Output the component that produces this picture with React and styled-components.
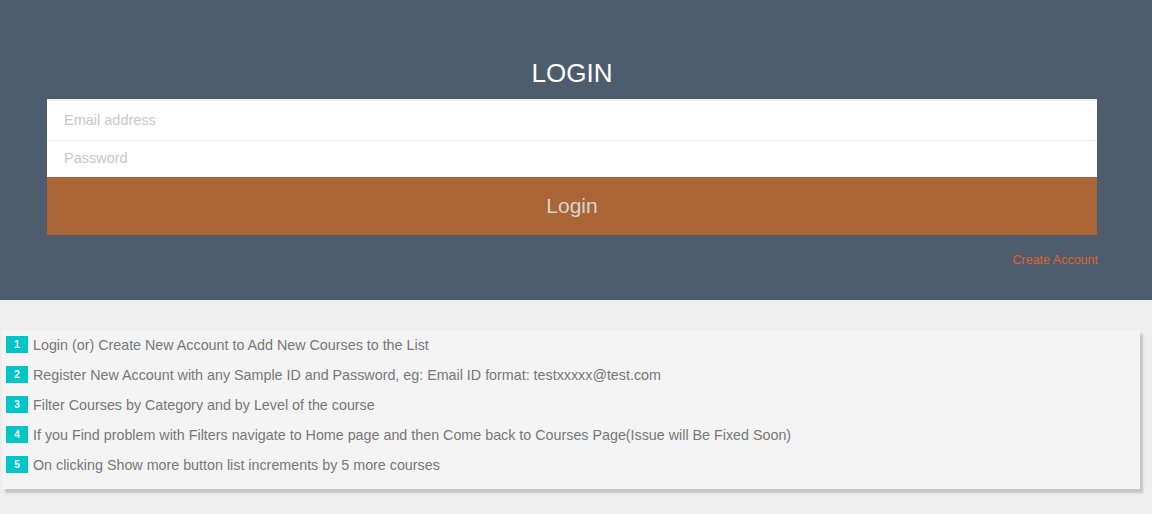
import React from 'react';
import styled, { createGlobalStyle } from 'styled-components';

const Global = createGlobalStyle`
  body {
    margin: 0;
    background: #eeeeee;
    font-family: 'Liberation Sans', Arial, sans-serif;
  }
`;

const Hero = styled.section`
  background: #4d5d6d;
  height: 300px;
  padding: 56px 55px 0 47px;
  box-sizing: border-box;
`;

const Title = styled.h1`
  margin: 0 0 9px;
  text-align: center;
  color: #ffffff;
  font-weight: 400;
  font-size: 26px;
  line-height: 34px;
`;

const Form = styled.form`
  display: flex;
  flex-direction: column;
`;

const Input = styled.input`
  height: ${p => p.$h}px;
  border: none;
  border-top: ${p => (p.$first ? '2px solid #eeeeee' : '1px solid #eeeeee')};
  padding: 0 17px 2px;
  font-family: 'Liberation Sans', Arial, sans-serif;
  font-size: 14.5px;
  color: #555;
  outline: none;
  box-sizing: border-box;
  background: #fff;
  &::placeholder {
    color: #c8c8c8;
  }
`;

const Button = styled.button`
  height: 58px;
  border: none;
  background: #aa6637;
  color: #d4d4d4;
  font-family: 'Liberation Sans', Arial, sans-serif;
  font-size: 21px;
  cursor: pointer;
`;

const LinkRow = styled.div`
  display: flex;
  justify-content: flex-end;
  margin-top: 18px;
`;

const CreateLink = styled.a`
  color: #e0622f;
  font-size: 12.5px;
  text-decoration: none;
  margin-right: -1px;
`;

const Notes = styled.div`
  margin: 30px 12px 24px 2px;
  background: #f4f4f4;
  box-shadow: 3px 4px 2px #c6c6c6;
  padding: 0 4px 9px;
`;

const Item = styled.div`
  display: flex;
  align-items: center;
  height: 30px;
  padding-bottom: 1px;
  box-sizing: border-box;
  color: #777777;
  font-size: 14.3px;
`;

const Badge = styled.span`
  display: inline-flex;
  align-items: center;
  justify-content: center;
  width: 22px;
  height: 17px;
  background: #00c6c8;
  color: #fff;
  font-size: 10px;
  font-weight: 700;
  margin-right: 5px;
`;

const notes = [
  'Login (or) Create New Account to Add New Courses to the List',
  'Register New Account with any Sample ID and Password, eg: Email ID format: testxxxxx@test.com',
  'Filter Courses by Category and by Level of the course',
  'If you Find problem with Filters navigate to Home page and then Come back to Courses Page(Issue will Be Fixed Soon)',
  'On clicking Show more button list increments by 5 more courses',
];

const App = () => (
  <>
    <Global />
    <Hero>
      <Title>LOGIN</Title>
      <Form onSubmit={e => e.preventDefault()}>
        <Input $first $h={41} type="email" placeholder="Email address" />
        <Input $h={37} type="password" placeholder="Password" />
        <Button type="submit">Login</Button>
      </Form>
      <LinkRow>
        <CreateLink href="#">Create Account</CreateLink>
      </LinkRow>
    </Hero>
    <Notes>
      {notes.map((n, i) => (
        <Item key={i}>
          <Badge>{i + 1}</Badge>
          {n}
        </Item>
      ))}
    </Notes>
  </>
);

export default App;
